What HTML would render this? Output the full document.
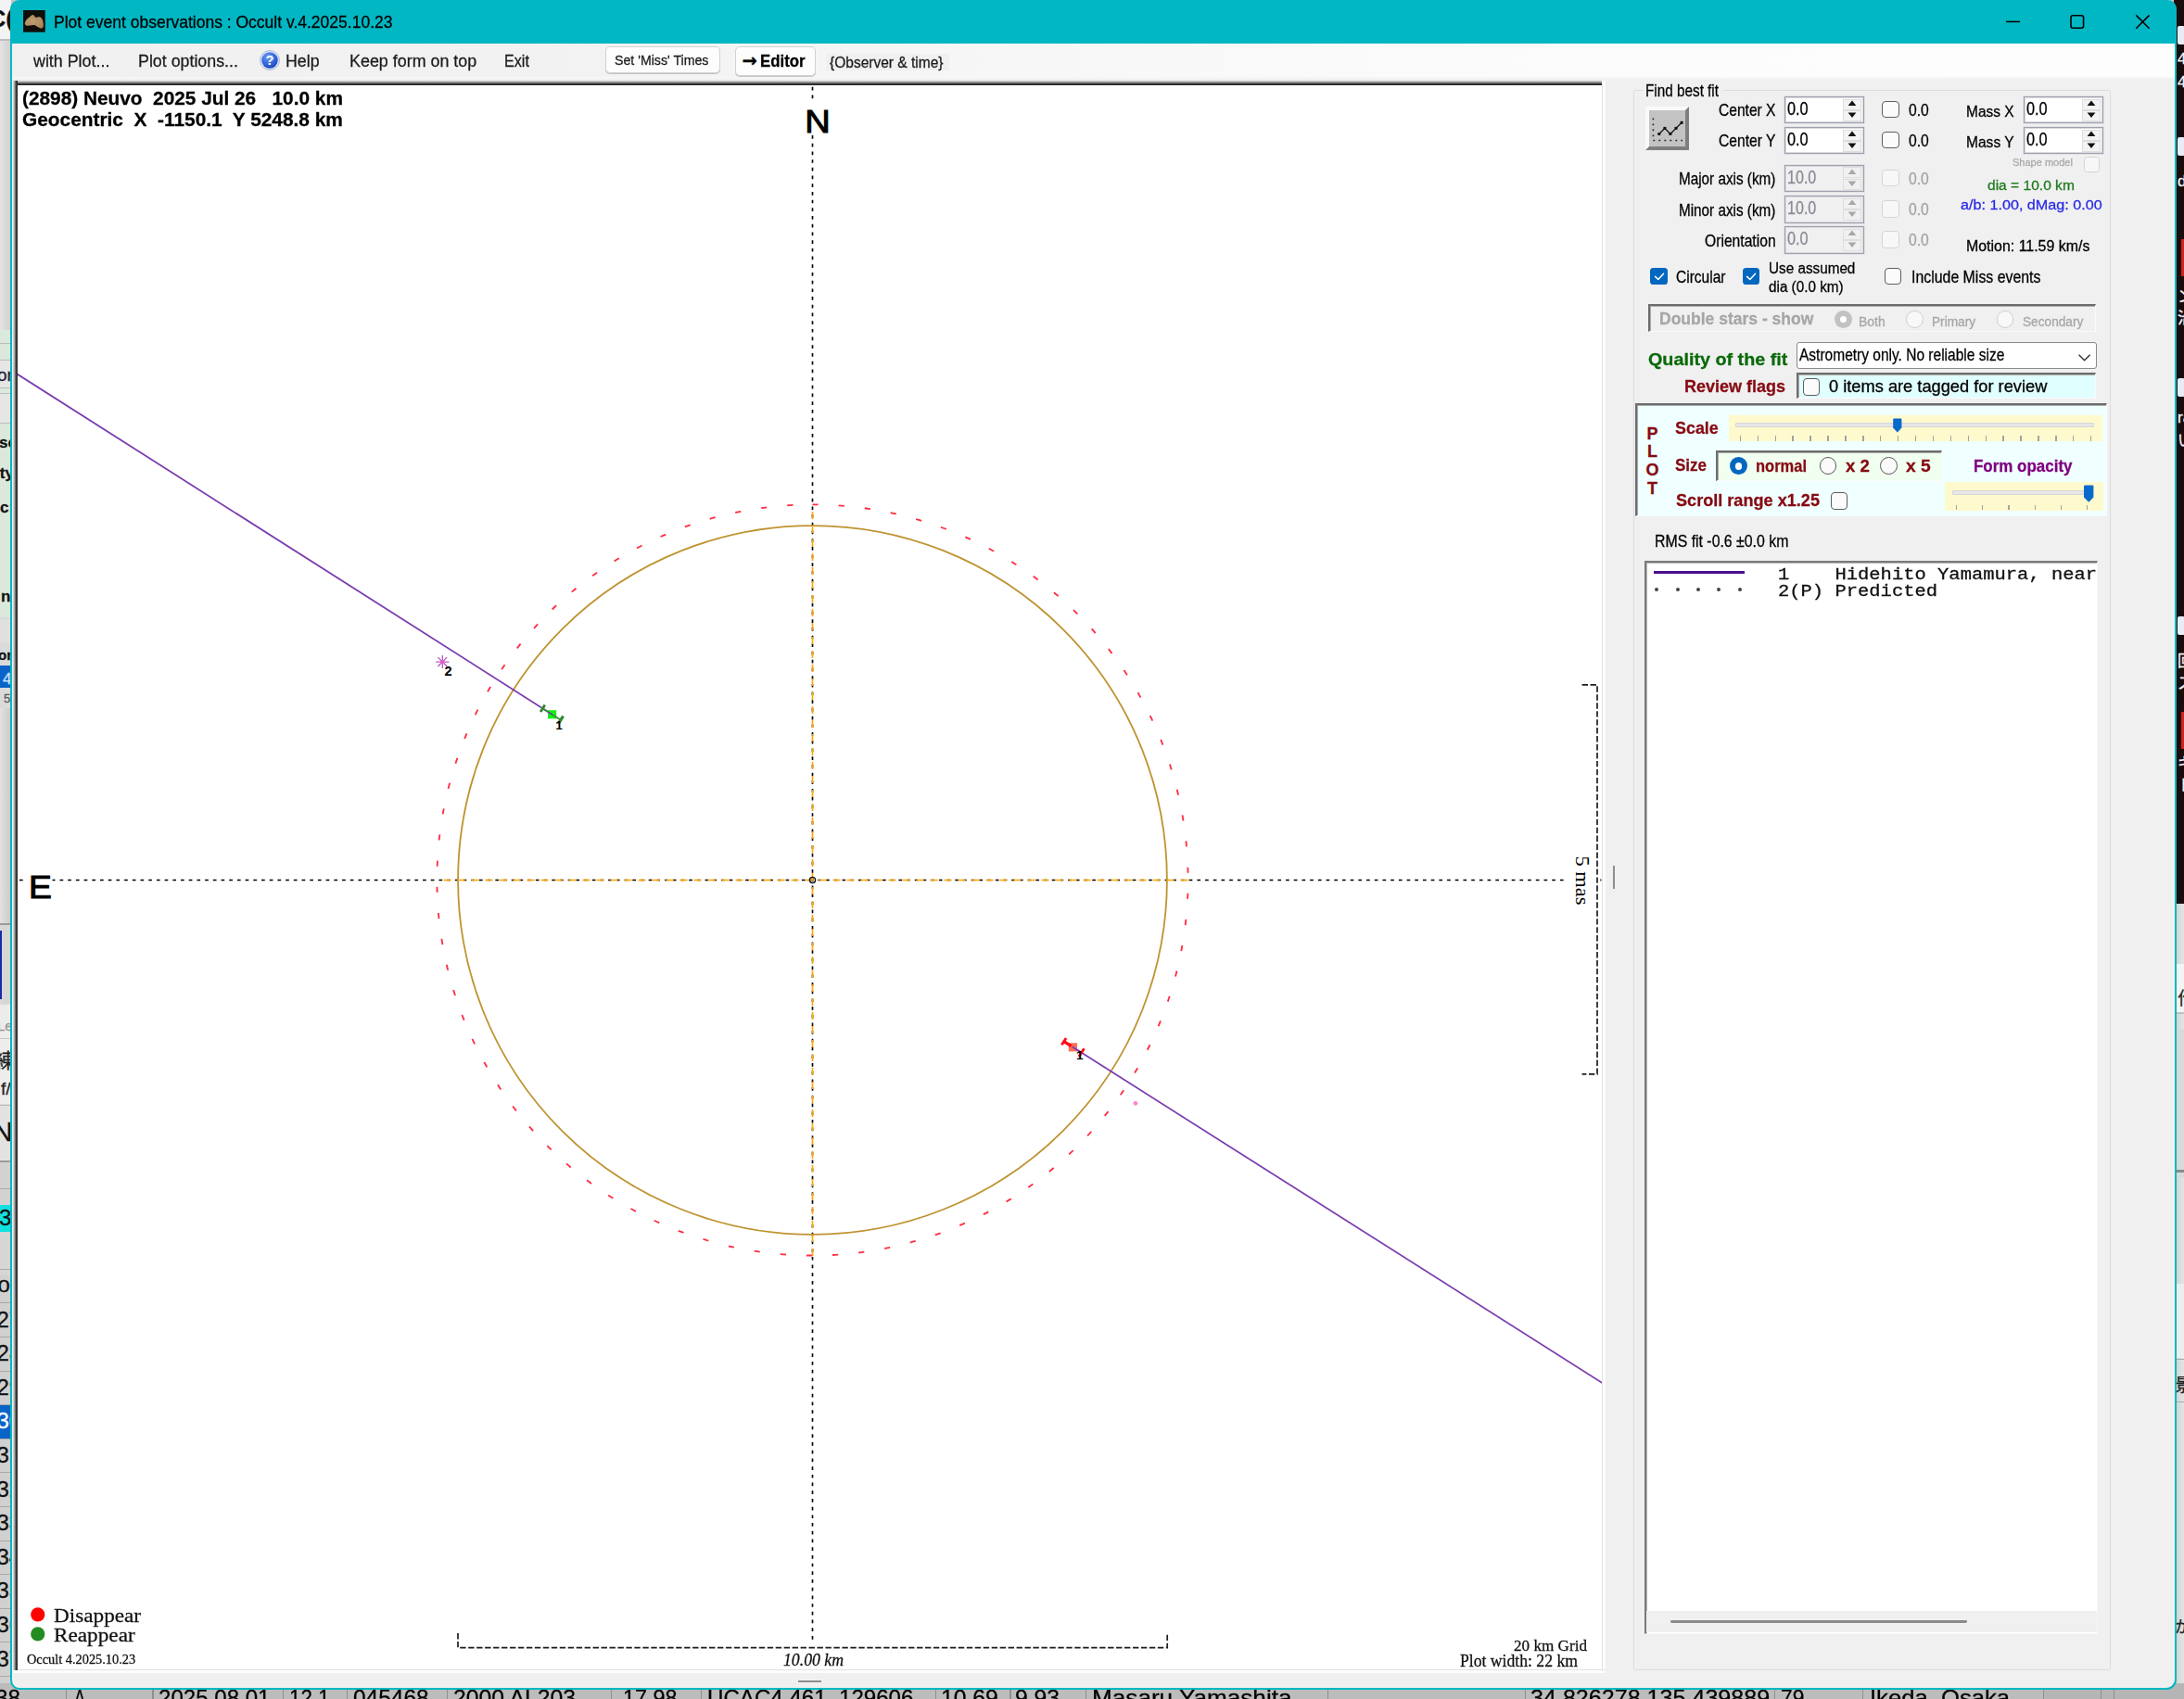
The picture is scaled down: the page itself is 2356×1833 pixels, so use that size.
<!DOCTYPE html>
<html lang="en"><head><meta charset="utf-8"><title>Plot event observations : Occult v.4.2025.10.23</title>
<style>
html,body{margin:0;padding:0}
body{width:2356px;height:1833px;position:relative;overflow:hidden;background:#c3c3c3;font-family:"Liberation Sans",sans-serif}
.b{position:absolute;box-sizing:border-box}
.t{position:absolute;white-space:pre;line-height:1;display:block;-webkit-text-stroke:0.28px}
svg{position:absolute;left:0;top:0}
</style></head><body>
<div id="desktop-background">
<div class="b" style="left:0.00px;top:0.00px;width:12.00px;height:1833.00px;background:#dadada;"></div>
<div class="b" style="left:0.00px;top:0.00px;width:12.00px;height:42.00px;background:#f3f3f3;"></div>
<span class="t" style="left:-12.60px;top:7.19px;font:normal 700 26px/1 'Liberation Sans',sans-serif;color:#111;">C(</span>
<div class="b" style="left:0.00px;top:42.00px;width:12.00px;height:2.00px;background:#bdbdbd;"></div>
<div class="b" style="left:0.00px;top:44.00px;width:12.00px;height:312.00px;background:linear-gradient(90deg,#e4e4e4,#cfcfcf);"></div>
<div class="b" style="left:0.00px;top:356.00px;width:12.00px;height:33.00px;background:#dbe8dc;"></div>
<div class="b" style="left:0.00px;top:370.00px;width:12.00px;height:1.00px;background:#bcbcbc;"></div>
<div class="b" style="left:0.00px;top:388.00px;width:12.00px;height:31.00px;background:#e6e6e6;"></div>
<div class="b" style="left:0.00px;top:388.00px;width:12.00px;height:1.00px;background:#bcbcbc;"></div>
<span class="t" style="left:-3.00px;top:395.11px;font:normal 400 19px/1 'Liberation Sans',sans-serif;color:#223;">or</span>
<div class="b" style="left:0.00px;top:418.00px;width:12.00px;height:6.00px;background:#dbe8dc;"></div>
<div class="b" style="left:0.00px;top:418.00px;width:12.00px;height:1.00px;background:#bcbcbc;"></div>
<div class="b" style="left:0.00px;top:424.00px;width:12.00px;height:1.00px;background:#bcbcbc;"></div>
<div class="b" style="left:0.00px;top:425.00px;width:12.00px;height:31.00px;background:#e6e6e6;"></div>
<div class="b" style="left:0.00px;top:456.00px;width:12.00px;height:210.00px;background:#dbe8dc;"></div>
<div class="b" style="left:0.00px;top:456.00px;width:12.00px;height:1.00px;background:#bcbcbc;"></div>
<span class="t" style="left:-1.00px;top:468.81px;font:normal 700 17px/1 'Liberation Sans',sans-serif;color:#111;">se</span>
<span class="t" style="left:-5.00px;top:501.81px;font:normal 700 17px/1 'Liberation Sans',sans-serif;color:#111;">ity</span>
<span class="t" style="left:0.00px;top:538.81px;font:normal 700 17px/1 'Liberation Sans',sans-serif;color:#111;">c:</span>
<span class="t" style="left:1.00px;top:634.81px;font:normal 700 17px/1 'Liberation Sans',sans-serif;color:#111;">n</span>
<div class="b" style="left:0.00px;top:668.00px;width:12.00px;height:25.00px;background:#e0e0e0;"></div>
<span class="t" style="left:-2.00px;top:698.50px;font:normal 700 15px/1 'Liberation Sans',sans-serif;color:#111;">or</span>
<div class="b" style="left:0.00px;top:718.00px;width:12.00px;height:24.00px;background:#0a64c8;"></div>
<span class="t" style="left:3.00px;top:723.81px;font:normal 400 17px/1 'Liberation Sans',sans-serif;color:#cfe4ff;">4</span>
<span class="t" style="left:4.00px;top:747.19px;font:normal 400 13px/1 'Liberation Sans',sans-serif;color:#555;">5</span>
<div class="b" style="left:0.00px;top:764.00px;width:12.00px;height:232.00px;background:linear-gradient(90deg,#e2e2e2,#c9c9c9);"></div>
<div class="b" style="left:0.00px;top:996.00px;width:12.00px;height:2.00px;background:#9a9a9a;"></div>
<div class="b" style="left:0.00px;top:1004.00px;width:2.00px;height:74.00px;background:#1a2aa8;"></div>
<div class="b" style="left:2.00px;top:998.00px;width:10.00px;height:84.00px;background:#d6d6d6;"></div>
<div class="b" style="left:0.00px;top:1084.00px;width:12.00px;height:36.00px;background:#ececec;"></div>
<span class="t" style="left:-3.00px;top:1098.50px;font:normal 400 15px/1 'Liberation Sans',sans-serif;color:#999;">Le</span>
<div class="b" style="left:0.00px;top:1120.00px;width:12.00px;height:1.00px;background:#c8c8c8;"></div>
<div class="b" style="left:0.00px;top:1121.00px;width:12.00px;height:70.00px;background:#ededed;"></div>
<span class="t" style="left:-6.00px;top:1133.57px;font:normal 400 22px/1 'Liberation Sans',sans-serif;color:#222;font-family:'Liberation Sans','Noto Sans CJK JP',sans-serif;">練</span>
<span class="t" style="left:1.00px;top:1165.11px;font:normal 400 19px/1 'Liberation Sans',sans-serif;color:#222;">f/</span>
<div class="b" style="left:0.00px;top:1192.00px;width:12.00px;height:60.00px;background:#e2e2e2;"></div>
<div class="b" style="left:0.00px;top:1192.00px;width:12.00px;height:1.00px;background:#bbb;"></div>
<span class="t" style="left:-8.00px;top:1205.80px;font:normal 400 30px/1 'Liberation Sans',sans-serif;color:#111;">N(</span>
<div class="b" style="left:0.00px;top:1252.00px;width:12.00px;height:2.00px;background:#9c9c9c;"></div>
<div class="b" style="left:0.00px;top:1254.00px;width:12.00px;height:52.00px;background:#d2d2d2;"></div>
<div class="b" style="left:0.00px;top:1282.00px;width:12.00px;height:1.00px;background:#aaa;"></div>
<div class="b" style="left:0.00px;top:1299.50px;width:12.00px;height:29.50px;background:#12e0e0;"></div>
<span class="t" style="left:-1.00px;top:1302.48px;font:normal 400 24px/1 'Liberation Sans',sans-serif;color:#111;">3</span>
<div class="b" style="left:0.00px;top:1329.00px;width:12.00px;height:47.00px;background:#d6d6d6;"></div>
<div class="b" style="left:0.00px;top:1376.00px;width:12.00px;height:460.00px;background:#d0d0d0;"></div>
<div class="b" style="left:0.00px;top:1368.80px;width:12.00px;height:1.00px;background:#a8a8a8;"></div>
<span class="t" style="left:-2.50px;top:1373.88px;font:normal 400 24px/1 'Liberation Sans',sans-serif;color:#111;">o</span>
<div class="b" style="left:0.00px;top:1405.40px;width:12.00px;height:1.00px;background:#a8a8a8;"></div>
<span class="t" style="left:-3.60px;top:1411.68px;font:normal 400 24px/1 'Liberation Sans',sans-serif;color:#111;">27</span>
<div class="b" style="left:0.00px;top:1442.00px;width:12.00px;height:1.00px;background:#a8a8a8;"></div>
<span class="t" style="left:-3.60px;top:1448.28px;font:normal 400 24px/1 'Liberation Sans',sans-serif;color:#111;">28</span>
<div class="b" style="left:0.00px;top:1478.60px;width:12.00px;height:1.00px;background:#a8a8a8;"></div>
<span class="t" style="left:-3.60px;top:1484.88px;font:normal 400 24px/1 'Liberation Sans',sans-serif;color:#111;">29</span>
<div class="b" style="left:0.00px;top:1515.20px;width:12.00px;height:1.00px;background:#a8a8a8;"></div>
<div class="b" style="left:0.00px;top:1516.20px;width:12.00px;height:35.60px;background:#0a64c8;"></div>
<span class="t" style="left:-3.60px;top:1521.48px;font:normal 400 24px/1 'Liberation Sans',sans-serif;color:#fff;">30</span>
<div class="b" style="left:0.00px;top:1551.80px;width:12.00px;height:1.00px;background:#a8a8a8;"></div>
<span class="t" style="left:-3.60px;top:1558.08px;font:normal 400 24px/1 'Liberation Sans',sans-serif;color:#111;">31</span>
<div class="b" style="left:0.00px;top:1588.40px;width:12.00px;height:1.00px;background:#a8a8a8;"></div>
<span class="t" style="left:-3.60px;top:1594.68px;font:normal 400 24px/1 'Liberation Sans',sans-serif;color:#111;">32</span>
<div class="b" style="left:0.00px;top:1625.00px;width:12.00px;height:1.00px;background:#a8a8a8;"></div>
<span class="t" style="left:-3.60px;top:1631.28px;font:normal 400 24px/1 'Liberation Sans',sans-serif;color:#111;">33</span>
<div class="b" style="left:0.00px;top:1661.60px;width:12.00px;height:1.00px;background:#a8a8a8;"></div>
<span class="t" style="left:-3.60px;top:1667.88px;font:normal 400 24px/1 'Liberation Sans',sans-serif;color:#111;">34</span>
<div class="b" style="left:0.00px;top:1698.20px;width:12.00px;height:1.00px;background:#a8a8a8;"></div>
<span class="t" style="left:-3.60px;top:1704.48px;font:normal 400 24px/1 'Liberation Sans',sans-serif;color:#111;">35</span>
<div class="b" style="left:0.00px;top:1734.80px;width:12.00px;height:1.00px;background:#a8a8a8;"></div>
<span class="t" style="left:-3.60px;top:1741.08px;font:normal 400 24px/1 'Liberation Sans',sans-serif;color:#111;">36</span>
<div class="b" style="left:0.00px;top:1771.40px;width:12.00px;height:1.00px;background:#a8a8a8;"></div>
<span class="t" style="left:-3.60px;top:1777.68px;font:normal 400 24px/1 'Liberation Sans',sans-serif;color:#111;">37</span>
<div class="b" style="left:0.00px;top:1808.00px;width:12.00px;height:1.00px;background:#a8a8a8;"></div>
<div class="b" style="left:2345.00px;top:0.00px;width:11.00px;height:1833.00px;background:#1b0c0c;"></div>
<div class="b" style="left:2345.00px;top:975.00px;width:11.00px;height:858.00px;background:linear-gradient(90deg,#d0d0d0,#e4e4e4);"></div>
<div class="b" style="left:2349.00px;top:28.00px;width:8.00px;height:20.00px;background:#e8ecf4;border-radius:2px"></div>
<div class="b" style="left:2349.00px;top:148.00px;width:8.00px;height:20.00px;background:#e8ecf4;border-radius:2px"></div>
<div class="b" style="left:2349.00px;top:408.00px;width:8.00px;height:20.00px;background:#e8ecf4;border-radius:2px"></div>
<div class="b" style="left:2349.00px;top:665.00px;width:8.00px;height:20.00px;background:#e8ecf4;border-radius:2px"></div>
<div class="b" style="left:2353.00px;top:258.00px;width:3.00px;height:40.00px;background:#d42020;"></div>
<div class="b" style="left:2353.00px;top:768.00px;width:3.00px;height:40.00px;background:#d42020;"></div>
<span class="t" style="left:2349.00px;top:54.81px;font:normal 400 17px/1 'Liberation Sans',sans-serif;color:#f4f4f4;font-family:'Liberation Sans','Noto Sans CJK JP',sans-serif;">4</span>
<span class="t" style="left:2349.00px;top:79.81px;font:normal 400 17px/1 'Liberation Sans',sans-serif;color:#f4f4f4;font-family:'Liberation Sans','Noto Sans CJK JP',sans-serif;">4</span>
<span class="t" style="left:2349.00px;top:186.81px;font:normal 400 17px/1 'Liberation Sans',sans-serif;color:#f4f4f4;font-family:'Liberation Sans','Noto Sans CJK JP',sans-serif;">d</span>
<span class="t" style="left:2349.00px;top:311.81px;font:normal 400 17px/1 'Liberation Sans',sans-serif;color:#f4f4f4;font-family:'Liberation Sans','Noto Sans CJK JP',sans-serif;">ン</span>
<span class="t" style="left:2349.00px;top:334.81px;font:normal 400 17px/1 'Liberation Sans',sans-serif;color:#f4f4f4;font-family:'Liberation Sans','Noto Sans CJK JP',sans-serif;">治</span>
<span class="t" style="left:2349.00px;top:441.81px;font:normal 400 17px/1 'Liberation Sans',sans-serif;color:#f4f4f4;font-family:'Liberation Sans','Noto Sans CJK JP',sans-serif;">ra</span>
<span class="t" style="left:2349.00px;top:466.81px;font:normal 400 17px/1 'Liberation Sans',sans-serif;color:#f4f4f4;font-family:'Liberation Sans','Noto Sans CJK JP',sans-serif;">い</span>
<span class="t" style="left:2349.00px;top:704.81px;font:normal 400 17px/1 'Liberation Sans',sans-serif;color:#f4f4f4;font-family:'Liberation Sans','Noto Sans CJK JP',sans-serif;">回</span>
<span class="t" style="left:2349.00px;top:728.81px;font:normal 400 17px/1 'Liberation Sans',sans-serif;color:#f4f4f4;font-family:'Liberation Sans','Noto Sans CJK JP',sans-serif;">ス</span>
<span class="t" style="left:2349.00px;top:814.81px;font:normal 400 17px/1 'Liberation Sans',sans-serif;color:#f4f4f4;font-family:'Liberation Sans','Noto Sans CJK JP',sans-serif;">キ</span>
<span class="t" style="left:2349.00px;top:838.81px;font:normal 400 17px/1 'Liberation Sans',sans-serif;color:#f4f4f4;font-family:'Liberation Sans','Noto Sans CJK JP',sans-serif;">ト</span>
<div class="b" style="left:2346.00px;top:1040.00px;width:10.00px;height:52.00px;background:#f4f4f4;"></div>
<span class="t" style="left:2349.00px;top:1068.11px;font:normal 400 19px/1 'Liberation Sans',sans-serif;color:#222;font-family:'Liberation Sans','Noto Sans CJK JP',sans-serif;">作</span>
<div class="b" style="left:2346.00px;top:1092.00px;width:10.00px;height:2.00px;background:#c0c0c0;"></div>
<div class="b" style="left:2346.00px;top:1110.00px;width:10.00px;height:160.00px;background:#d9d9d9;"></div>
<div class="b" style="left:2346.00px;top:1262.00px;width:10.00px;height:3.00px;background:#8a8a8a;"></div>
<div class="b" style="left:2346.00px;top:1385.00px;width:10.00px;height:80.00px;background:#eeeeee;"></div>
<div class="b" style="left:2346.00px;top:1466.00px;width:10.00px;height:1.00px;background:#aaa;"></div>
<div class="b" style="left:2346.00px;top:1512.00px;width:10.00px;height:1.00px;background:#aaa;"></div>
<span class="t" style="left:2346.00px;top:1485.11px;font:normal 400 19px/1 'Liberation Sans',sans-serif;color:#222;font-family:'Liberation Sans','Noto Sans CJK JP',sans-serif;">景</span>
<span class="t" style="left:2346.00px;top:1746.81px;font:normal 400 17px/1 'Liberation Sans',sans-serif;color:#222;font-family:'Liberation Sans','Noto Sans CJK JP',sans-serif;">が</span>
<div class="b" style="left:0.00px;top:1816.00px;width:2356.00px;height:17.00px;background:#bcbcbc;"></div>
<div class="b" style="left:2205.00px;top:1816.00px;width:151.00px;height:17.00px;background:#b5b5b5;"></div>
<div class="b" style="left:71.00px;top:1816.00px;width:1.30px;height:17.00px;background:#8f8f8f;"></div>
<div class="b" style="left:164.40px;top:1816.00px;width:1.30px;height:17.00px;background:#8f8f8f;"></div>
<div class="b" style="left:305.00px;top:1816.00px;width:1.30px;height:17.00px;background:#8f8f8f;"></div>
<div class="b" style="left:374.00px;top:1816.00px;width:1.30px;height:17.00px;background:#8f8f8f;"></div>
<div class="b" style="left:482.00px;top:1816.00px;width:1.30px;height:17.00px;background:#8f8f8f;"></div>
<div class="b" style="left:658.50px;top:1816.00px;width:1.30px;height:17.00px;background:#8f8f8f;"></div>
<div class="b" style="left:755.70px;top:1816.00px;width:1.30px;height:17.00px;background:#8f8f8f;"></div>
<div class="b" style="left:1009.20px;top:1816.00px;width:1.30px;height:17.00px;background:#8f8f8f;"></div>
<div class="b" style="left:1089.40px;top:1816.00px;width:1.30px;height:17.00px;background:#8f8f8f;"></div>
<div class="b" style="left:1170.90px;top:1816.00px;width:1.30px;height:17.00px;background:#8f8f8f;"></div>
<div class="b" style="left:1431.90px;top:1816.00px;width:1.30px;height:17.00px;background:#8f8f8f;"></div>
<div class="b" style="left:1644.80px;top:1816.00px;width:1.30px;height:17.00px;background:#8f8f8f;"></div>
<div class="b" style="left:1914.00px;top:1816.00px;width:1.30px;height:17.00px;background:#8f8f8f;"></div>
<div class="b" style="left:2008.60px;top:1816.00px;width:1.30px;height:17.00px;background:#8f8f8f;"></div>
<div class="b" style="left:2204.20px;top:1816.00px;width:1.30px;height:17.00px;background:#8f8f8f;"></div>
<div class="b" style="left:2265.70px;top:1816.00px;width:1.30px;height:17.00px;background:#8f8f8f;"></div>
<div class="b" style="left:2279.80px;top:1816.00px;width:1.30px;height:17.00px;background:#8f8f8f;"></div>
<span class="t" style="left:-5.00px;top:1820.48px;font:normal 400 24px/1 'Liberation Sans',sans-serif;color:#000;transform:scaleX(1.0114);transform-origin:left center;">38</span>
<span class="t" style="left:80.00px;top:1820.48px;font:normal 400 24px/1 'Liberation Sans',sans-serif;color:#000;transform:scaleX(0.7496);transform-origin:left center;">A</span>
<span class="t" style="left:171.00px;top:1820.48px;font:normal 400 24px/1 'Liberation Sans',sans-serif;color:#000;transform:scaleX(1.0032);transform-origin:left center;">2025.08.01</span>
<span class="t" style="left:312.30px;top:1820.48px;font:normal 400 24px/1 'Liberation Sans',sans-serif;color:#000;transform:scaleX(0.9355);transform-origin:left center;">12.1</span>
<span class="t" style="left:380.70px;top:1820.48px;font:normal 400 24px/1 'Liberation Sans',sans-serif;color:#000;transform:scaleX(1.0201);transform-origin:left center;">045468</span>
<span class="t" style="left:488.70px;top:1820.48px;font:normal 400 24px/1 'Liberation Sans',sans-serif;color:#000;transform:scaleX(1.0302);transform-origin:left center;">2000 AL203</span>
<span class="t" style="left:672.00px;top:1820.48px;font:normal 400 24px/1 'Liberation Sans',sans-serif;color:#000;transform:scaleX(0.9740);transform-origin:left center;">17.98</span>
<span class="t" style="left:763.00px;top:1820.48px;font:normal 400 24px/1 'Liberation Sans',sans-serif;color:#000;transform:scaleX(1.0041);transform-origin:left center;">UCAC4 461_129606</span>
<span class="t" style="left:1015.20px;top:1820.48px;font:normal 400 24px/1 'Liberation Sans',sans-serif;color:#000;transform:scaleX(1.0290);transform-origin:left center;">10.69</span>
<span class="t" style="left:1095.30px;top:1820.48px;font:normal 400 24px/1 'Liberation Sans',sans-serif;color:#000;transform:scaleX(1.0297);transform-origin:left center;">9.93</span>
<span class="t" style="left:1177.70px;top:1820.48px;font:normal 400 24px/1 'Liberation Sans',sans-serif;color:#000;transform:scaleX(1.0891);transform-origin:left center;">Masaru Yamashita</span>
<span class="t" style="left:1650.70px;top:1820.48px;font:normal 400 24px/1 'Liberation Sans',sans-serif;color:#000;transform:scaleX(1.0457);transform-origin:left center;">34.826278 135.439889</span>
<span class="t" style="left:1921.30px;top:1820.48px;font:normal 400 24px/1 'Liberation Sans',sans-serif;color:#000;transform:scaleX(0.9477);transform-origin:left center;">79</span>
<span class="t" style="left:2016.70px;top:1820.48px;font:normal 400 24px/1 'Liberation Sans',sans-serif;color:#000;transform:scaleX(1.0685);transform-origin:left center;">Ikeda, Osaka</span>
</div>
<header id="window-chrome">
<div class="b" id="win" style="left:11px;top:0;width:2337px;height:1823px;background:#f0f0f0;border:2px solid #00b7c3;border-top:0;border-radius:10px 10px 11px 10px;overflow:hidden"></div>
<div class="b" style="left:11.00px;top:0.00px;width:2337.00px;height:47.00px;background:#00b7c3;border-radius:10px 10px 0 0"></div>
<svg width="23.8" height="23.7" viewBox="0 0 24 24" style="left:25.1px;top:11.2px"><defs><radialGradient id="ag" cx="0.45" cy="0.45" r="0.7"><stop offset="0" stop-color="#bd9d70"/><stop offset="0.7" stop-color="#ad8d60"/><stop offset="1" stop-color="#9a7c52"/></radialGradient><filter id="ab" x="-10%" y="-10%" width="120%" height="120%"><feGaussianBlur stdDeviation="0.35"/></filter></defs><rect width="24" height="24" fill="#100e09"/>
<path d="M1.72 15.02 Q1.52 14.21 2.23 12.59 Q2.94 10.97 4.15 9.75 Q5.36 8.54 6.98 7.32 Q8.60 6.11 9.52 5.41 Q10.43 4.70 11.04 5.10 Q11.64 5.50 12.14 6.42 Q12.65 7.33 13.46 7.74 Q14.27 8.14 15.48 7.63 Q16.70 7.13 17.71 7.23 Q18.72 7.33 19.73 8.34 Q20.75 9.35 21.26 10.97 Q21.76 12.59 21.97 14.31 Q22.17 16.03 22.07 17.34 Q21.96 18.66 21.15 19.37 Q20.34 20.08 19.23 19.88 Q18.12 19.68 16.80 18.87 Q15.49 18.06 14.28 17.14 Q13.06 16.23 11.85 16.13 Q10.63 16.03 8.80 16.44 Q6.98 16.84 5.46 16.94 Q3.95 17.04 2.94 16.43 Q1.92 15.83 1.72 15.02 Z" fill="url(#ag)" filter="url(#ab)"/>
<path d="M14.3 9 C14.8 11.5 14.2 14 13.2 15.8" stroke="#9b7d55" stroke-width="0.9" stroke-opacity="0.45" fill="none" filter="url(#ab)"/></svg>
<span class="t" style="left:57.80px;top:15.15px;font:normal 400 18.6px/1 'Liberation Sans',sans-serif;color:#000;transform:scaleX(0.9412);transform-origin:left center;">Plot event observations : Occult v.4.2025.10.23</span>
<svg width="200" height="47" viewBox="0 0 200 47" style="left:2140px;top:0">
<path d="M24 23.4 H39" stroke="#000" stroke-width="1.5" fill="none"/>
<rect x="94" y="16.8" width="13.6" height="13.4" rx="2.2" fill="none" stroke="#000" stroke-width="1.6"/>
<path d="M164.3 16.4 L178.6 30.7 M178.6 16.4 L164.3 30.7" stroke="#000" stroke-width="1.5" fill="none"/></svg>
<div class="b" style="left:13.00px;top:47.00px;width:2333.00px;height:37.00px;background:linear-gradient(90deg,#f0f0f0 0%,#f2f2f2 25%,#f8f8f8 50%,#fcfcfc 75%,#fdfdfd 100%);"></div>
<div class="b" style="left:13.00px;top:83.00px;width:2333.00px;height:3.00px;background:linear-gradient(180deg,#f8f8f8,#f0f0f0);"></div>
<span class="t" style="left:36.10px;top:56.50px;font:normal 400 18.9px/1 'Liberation Sans',sans-serif;color:#1b1b1b;transform:scaleX(0.9452);transform-origin:left center;">with Plot...</span>
<span class="t" style="left:148.70px;top:56.50px;font:normal 400 18.9px/1 'Liberation Sans',sans-serif;color:#1b1b1b;transform:scaleX(0.9431);transform-origin:left center;">Plot options...</span>
<span class="t" style="left:308.10px;top:56.50px;font:normal 400 18.9px/1 'Liberation Sans',sans-serif;color:#1b1b1b;transform:scaleX(0.9416);transform-origin:left center;">Help</span>
<span class="t" style="left:376.80px;top:56.50px;font:normal 400 18.9px/1 'Liberation Sans',sans-serif;color:#1b1b1b;transform:scaleX(0.9470);transform-origin:left center;">Keep form on top</span>
<span class="t" style="left:543.50px;top:56.50px;font:normal 400 18.9px/1 'Liberation Sans',sans-serif;color:#1b1b1b;transform:scaleX(0.8538);transform-origin:left center;">Exit</span>
<svg width="24" height="24" viewBox="0 0 22 22" style="left:278.7px;top:53.4px">
<defs><radialGradient id="hg" cx="0.4" cy="0.3" r="0.8"><stop offset="0" stop-color="#6f9df5"/><stop offset="0.6" stop-color="#2e62d8"/><stop offset="1" stop-color="#1b3fa8"/></radialGradient></defs>
<circle cx="11" cy="11" r="9.6" fill="#dfe6f6" stroke="#9fb2dc" stroke-width="0.8"/>
<circle cx="11" cy="11" r="8" fill="url(#hg)"/>
<text x="11" y="15.8" text-anchor="middle" font-family="Liberation Sans,sans-serif" font-weight="700" font-size="13.5" fill="#fff">?</text></svg>
<div class="b" style="left:653.00px;top:50.00px;width:124.20px;height:29.40px;background:#fdfdfd;border:1px solid #d2d2d2;border-radius:5px;box-shadow:0 1px 0 #c4c4c4"></div>
<span class="t" style="left:662.70px;top:57.64px;font:normal 400 14.6px/1 'Liberation Sans',sans-serif;color:#1a1a1a;transform:scaleX(0.9709);transform-origin:left center;">Set &#x27;Miss&#x27; Times</span>
<div class="b" style="left:792.50px;top:49.60px;width:87.00px;height:32.40px;background:#fdfdfd;border:1px solid #d2d2d2;border-radius:5px;box-shadow:0 1px 0 #c4c4c4"></div>
<span class="t" style="left:800.6px;top:56px;font:700 19.5px/1 'DejaVu Sans','Liberation Sans',sans-serif;color:#000">→</span>
<span class="t" style="left:820.40px;top:56.95px;font:normal 700 18.6px/1 'Liberation Sans',sans-serif;color:#000;transform:scaleX(0.9045);transform-origin:left center;">Editor</span>
<div class="b" style="left:890.60px;top:57.70px;width:133.40px;height:18.00px;background:#f0f0f0;"></div>
<span class="t" style="left:895.40px;top:59.17px;font:normal 400 17.4px/1 'Liberation Sans',sans-serif;color:#1a1a1a;transform:scaleX(0.8928);transform-origin:left center;">{Observer &amp; time}</span>
</header>
<main id="plot-area">
<div class="b" style="left:14.00px;top:87.00px;width:1718.00px;height:1718.00px;background:#fff;"></div>
<div class="b" style="left:14.00px;top:87.00px;width:1714.00px;height:5.00px;background:linear-gradient(180deg,#dcdcdc 0%,#9a9a9a 35%,#3a3a3a 70%,#1c1c1c 100%);"></div>
<div class="b" style="left:14.20px;top:87.00px;width:4.80px;height:1714.60px;background:linear-gradient(90deg,#e6e6e6 0%,#a0a0a0 35%,#444 65%,#222 100%);"></div>
<div class="b" style="left:1728.00px;top:92.00px;width:4.00px;height:1713.00px;background:linear-gradient(90deg,#e2e2e2 0,#e2e2e2 25%,#fdfdfd 25%,#fdfdfd 100%);"></div>
<div class="b" style="left:19.00px;top:1801.00px;width:1713.00px;height:4.00px;background:linear-gradient(180deg,#e2e2e2 0,#e2e2e2 25%,#fdfdfd 25%,#fdfdfd 100%);"></div>
<svg width="2356" height="1833" viewBox="0 0 2356 1833"><defs><clipPath id="pc"><rect x="19" y="92" width="1709" height="1709"/></clipPath></defs><g clip-path="url(#pc)" fill="none">
<path d="M876.5 93.8 V1769.6" stroke="#000" stroke-width="1.65" stroke-dasharray="3.7 5.004"/>
<path d="M21 949.45 H1687.5" stroke="#000" stroke-width="1.65" stroke-dasharray="3.7 5.001"/>
<rect x="1726" y="948.45" width="1.6" height="2" fill="#555"/>
<rect x="866" y="109" width="32" height="37" fill="#fff"/>
<rect x="26" y="938" width="30.5" height="36" fill="#fff"/>
<circle cx="876.5" cy="949.45" r="382.4" stroke="#bf9330" stroke-width="1.8"/>
<circle cx="876.5" cy="949.45" r="405.1" stroke="#ff2e44" stroke-width="1.85" stroke-dasharray="6.1512 22.1301" transform="rotate(-90 876.5 949.45)"/>
<path d="M478.5 949.45 H1282" stroke="#ffa400" stroke-width="1.6" stroke-dasharray="8.1 6.9"/>
<path d="M876.5 551.9 V1355" stroke="#ffa400" stroke-width="1.6" stroke-dasharray="8.1 6.9"/>
<circle cx="876.5" cy="949.45" r="3.1" stroke="#111" stroke-width="1.4"/>
<path d="M18.3 403.4 L595.6 770.8" stroke="#7a3cb0" stroke-width="1.75"/>
<path d="M1157.4 1129.8 L1729 1492.3" stroke="#7a3cb0" stroke-width="1.75"/>
<rect x="591.0" y="766.1999999999999" width="9.2" height="9.2" fill="#19f019"/>
<path d="M585.5 764.4 L604.9 776.7" stroke="#2e8b2e" stroke-width="1.6"/>
<path d="M591.4 768.1 L595.6 770.8" stroke="#7a3cb0" stroke-width="1.6"/>
<path d="M587.8 760.6 L583.1 768.1" stroke="#2e8b2e" stroke-width="2.8"/>
<path d="M607.5 772.7 L602.3 780.8" stroke="#2e8b2e" stroke-width="3.2"/>
<rect x="1152.8000000000002" y="1125.2" width="9.2" height="9.2" fill="#ff6f55"/>
<path d="M1147.7 1123.6 L1155.7 1128.7" stroke="#ff0a14" stroke-width="3.2"/>
<path d="M1156.6 1129.3 L1165.8 1135.2" stroke="#7a3cb0" stroke-width="1.7"/>
<path d="M1150.1 1119.9 L1145.3 1127.3" stroke="#ff0a14" stroke-width="2.8"/>
<path d="M1169.5 1131.3 L1163.9 1140.1" stroke="#ff0a14" stroke-width="2.8"/>
<path d="M470.3 714.1 L484.3 714.1" stroke="#b04fc0" stroke-width="1.2"/>
<path d="M472.4 709.2 L482.2 719.0" stroke="#b04fc0" stroke-width="1.2"/>
<path d="M477.3 707.1 L477.3 721.1" stroke="#b04fc0" stroke-width="1.2"/>
<path d="M482.2 709.2 L472.4 719.0" stroke="#b04fc0" stroke-width="1.2"/>
<circle cx="477.3" cy="714.1" r="2.2" fill="#e55fc4"/>
<circle cx="1224.9" cy="1190.3" r="2.4" fill="#ff86cc"/>
<path d="M494 1762 V1777.7 H1259.2 V1762" stroke="#1e1e1e" stroke-width="1.7" stroke-dasharray="6.4 2.56"/>
<path d="M1706.6 738.8 H1723 V1158.8 H1706.6" stroke="#1e1e1e" stroke-width="1.7" stroke-dasharray="6.4 2.56"/>
</g>
<g font-family="Liberation Sans,sans-serif" font-weight="700" fill="#000">
<text transform="translate(868.2 142.5) scale(1.07 1)" font-size="35.6" font-weight="400" stroke="#000" stroke-width="1.1">N</text>
<text transform="translate(31 969.2) scale(1.04 1)" font-size="35.8" font-weight="400" stroke="#000" stroke-width="1.1">E</text>
<text x="479.6" y="729.2" font-size="14.6">2</text>
<text x="599.2" y="786.8" font-size="13.6">1</text>
<text x="1161" y="1143.4" font-size="13.6">1</text>
</g>
<text transform="translate(1699.8 923.4) rotate(90)" font-family="Liberation Serif,serif" font-size="22" fill="#000" textLength="53" lengthAdjust="spacingAndGlyphs">5 mas</text>
<circle cx="40.75" cy="1741.85" r="7.6" fill="#ff0000"/><circle cx="40.75" cy="1762.9" r="7.6" fill="#228b22"/>
</svg>
<span class="t" style="left:24.30px;top:95.81px;font:normal 700 20.3px/1 'Liberation Sans',sans-serif;color:#000;transform:scaleX(1.0261);transform-origin:left center;">(2898) Neuvo  2025 Jul 26   10.0 km</span>
<span class="t" style="left:24.30px;top:119.41px;font:normal 700 20.3px/1 'Liberation Sans',sans-serif;color:#000;transform:scaleX(1.0283);transform-origin:left center;">Geocentric  X  -1150.1  Y 5248.8 km</span>
<span class="t" style="left:57.90px;top:1732.71px;font:normal 400 21.6px/1 'Liberation Serif',serif;color:#111;transform:scaleX(1.0747);transform-origin:left center;">Disappear</span>
<span class="t" style="left:57.90px;top:1753.81px;font:normal 400 21.6px/1 'Liberation Serif',serif;color:#111;transform:scaleX(1.0754);transform-origin:left center;">Reappear</span>
<span class="t" style="left:29.30px;top:1783.47px;font:normal 400 14.6px/1 'Liberation Serif',serif;color:#111;transform:scaleX(0.9831);transform-origin:left center;">Occult 4.2025.10.23</span>
<span class="t" style="left:845.00px;top:1782.32px;font:italic 400 18.6px/1 'Liberation Serif',serif;color:#111;transform:scaleX(0.9532);transform-origin:left center;">10.00 km</span>
<span class="t" style="left:1633.20px;top:1767.46px;font:normal 400 17.6px/1 'Liberation Serif',serif;color:#111;transform:scaleX(0.9735);transform-origin:left center;">20 km Grid</span>
<span class="t" style="left:1574.90px;top:1783.29px;font:normal 400 18.4px/1 'Liberation Serif',serif;color:#111;transform:scaleX(0.9593);transform-origin:left center;">Plot width: 22 km</span>
<div class="b" style="left:861.00px;top:1813.00px;width:25.20px;height:1.60px;background:#8e8e8e;"></div>
<div class="b" style="left:1740.00px;top:933.80px;width:1.50px;height:25.00px;background:#8e8e8e;"></div>
</main>
<aside id="fit-panel">
<div class="b" style="left:1762.00px;top:97.00px;width:514.50px;height:1705.00px;border:1px solid #dcdcdc;border-radius:2px"></div>
<div class="b" style="left:1771.50px;top:90.00px;width:87.00px;height:14.00px;background:#f0f0f0;"></div>
<span class="t" style="left:1775.00px;top:90.33px;font:normal 400 17.8px/1 'Liberation Sans',sans-serif;color:#000;transform:scaleX(0.8597);transform-origin:left center;">Find best fit</span>
<div class="b" style="left:1774.60px;top:114.90px;width:47.80px;height:47.00px;background:#c3c3c3;border-style:solid;border-width:4.6px;border-color:#fafafa #7e7e7e #7e7e7e #fafafa"></div>
<svg width="48" height="47" viewBox="0 0 48 47" style="left:1774.6px;top:114.9px">
<path d="M8.4 12.5 V36.5" stroke="#222" stroke-width="1.6" stroke-dasharray="1.8 4.2" fill="none"/>
<path d="M8.4 36.5 H40" stroke="#222" stroke-width="1.6" stroke-dasharray="1.8 4.2" fill="none"/>
<path d="M14.8 29.5 L20.9 23.4 L26.9 29.5 L33 23.4 L39.1 17.3" stroke="#111" stroke-width="1.3" fill="none"/>
<g fill="#111"><rect x="13.3" y="28" width="3" height="3"/><rect x="19.4" y="21.9" width="3" height="3"/><rect x="25.4" y="28" width="3" height="3"/><rect x="31.5" y="21.9" width="3" height="3"/><rect x="37.6" y="15.8" width="3" height="3"/></g></svg>
<span class="t" style="left:1853.70px;top:111.43px;font:normal 400 17.8px/1 'Liberation Sans',sans-serif;color:#000;transform:scaleX(0.8755);transform-origin:left center;">Center X</span>
<div class="b" style="left:1924.70px;top:104.10px;width:86.40px;height:29.40px;background:#fff;border:1px solid #a0a2ac;box-shadow:inset 0 0 0 1px #d8d9e0,0 0 0 1px #e1e1e6"></div>
<div class="b" style="left:1987.70px;top:106.50px;width:20.60px;height:12.00px;background:#f3f3f3;border:1px solid #dedede"></div>
<div class="b" style="left:1987.70px;top:118.90px;width:20.60px;height:12.00px;background:#f3f3f3;border:1px solid #dedede"></div>
<svg width="12" height="26" viewBox="0 0 12 26" style="left:1992.0px;top:104.9px"><path d="M6 3.6 L10.4 9 H1.6 Z M6 22 L10.4 16.6 H1.6 Z" fill="#111"/></svg>
<span class="t" style="left:1927.90px;top:108.27px;font:normal 400 19.4px/1 'Liberation Sans',sans-serif;color:#000;transform:scaleX(0.8407);transform-origin:left center;">0.0</span>
<div class="b" style="left:2030.00px;top:108.90px;width:18.60px;height:18.60px;background:#fbfbfb;border:1.7px solid #5e5e5e;border-radius:4px"></div>
<span class="t" style="left:2058.60px;top:109.34px;font:normal 400 19.2px/1 'Liberation Sans',sans-serif;color:#000;transform:scaleX(0.8168);transform-origin:left center;">0.0</span>
<span class="t" style="left:1853.70px;top:144.43px;font:normal 400 17.8px/1 'Liberation Sans',sans-serif;color:#000;transform:scaleX(0.8795);transform-origin:left center;">Center Y</span>
<div class="b" style="left:1924.70px;top:137.10px;width:86.40px;height:29.40px;background:#fff;border:1px solid #a0a2ac;box-shadow:inset 0 0 0 1px #d8d9e0,0 0 0 1px #e1e1e6"></div>
<div class="b" style="left:1987.70px;top:139.50px;width:20.60px;height:12.00px;background:#f3f3f3;border:1px solid #dedede"></div>
<div class="b" style="left:1987.70px;top:151.90px;width:20.60px;height:12.00px;background:#f3f3f3;border:1px solid #dedede"></div>
<svg width="12" height="26" viewBox="0 0 12 26" style="left:1992.0px;top:137.9px"><path d="M6 3.6 L10.4 9 H1.6 Z M6 22 L10.4 16.6 H1.6 Z" fill="#111"/></svg>
<span class="t" style="left:1927.90px;top:141.27px;font:normal 400 19.4px/1 'Liberation Sans',sans-serif;color:#000;transform:scaleX(0.8407);transform-origin:left center;">0.0</span>
<div class="b" style="left:2030.00px;top:141.90px;width:18.60px;height:18.60px;background:#fbfbfb;border:1.7px solid #5e5e5e;border-radius:4px"></div>
<span class="t" style="left:2058.60px;top:142.34px;font:normal 400 19.2px/1 'Liberation Sans',sans-serif;color:#000;transform:scaleX(0.8168);transform-origin:left center;">0.0</span>
<span class="t" style="left:1810.70px;top:185.33px;font:normal 400 17.8px/1 'Liberation Sans',sans-serif;color:#000;transform:scaleX(0.8591);transform-origin:left center;">Major axis (km)</span>
<div class="b" style="left:1924.70px;top:178.00px;width:86.40px;height:29.40px;background:#f0f0f0;border:1px solid #a0a2ac;box-shadow:inset 0 0 0 1px #d8d9e0,0 0 0 1px #e1e1e6"></div>
<div class="b" style="left:1987.70px;top:180.40px;width:20.60px;height:12.00px;background:#f0f0f0;border:1px solid #dedede"></div>
<div class="b" style="left:1987.70px;top:192.80px;width:20.60px;height:12.00px;background:#f0f0f0;border:1px solid #dedede"></div>
<svg width="12" height="26" viewBox="0 0 12 26" style="left:1992.0px;top:178.8px"><path d="M6 3.6 L10.4 9 H1.6 Z M6 22 L10.4 16.6 H1.6 Z" fill="#a8a8a8"/></svg>
<span class="t" style="left:1927.90px;top:182.17px;font:normal 400 19.4px/1 'Liberation Sans',sans-serif;color:#8b8b97;transform:scaleX(0.8291);transform-origin:left center;">10.0</span>
<div class="b" style="left:2030.00px;top:182.80px;width:18.60px;height:18.60px;background:#f7f7f7;border:1.3px solid #d4d4d4;border-radius:3.6px"></div>
<span class="t" style="left:2058.60px;top:183.24px;font:normal 400 19.2px/1 'Liberation Sans',sans-serif;color:#a3a3a3;transform:scaleX(0.8168);transform-origin:left center;">0.0</span>
<span class="t" style="left:1810.70px;top:218.53px;font:normal 400 17.8px/1 'Liberation Sans',sans-serif;color:#000;transform:scaleX(0.8591);transform-origin:left center;">Minor axis (km)</span>
<div class="b" style="left:1924.70px;top:211.20px;width:86.40px;height:29.40px;background:#f0f0f0;border:1px solid #a0a2ac;box-shadow:inset 0 0 0 1px #d8d9e0,0 0 0 1px #e1e1e6"></div>
<div class="b" style="left:1987.70px;top:213.60px;width:20.60px;height:12.00px;background:#f0f0f0;border:1px solid #dedede"></div>
<div class="b" style="left:1987.70px;top:226.00px;width:20.60px;height:12.00px;background:#f0f0f0;border:1px solid #dedede"></div>
<svg width="12" height="26" viewBox="0 0 12 26" style="left:1992.0px;top:212.0px"><path d="M6 3.6 L10.4 9 H1.6 Z M6 22 L10.4 16.6 H1.6 Z" fill="#a8a8a8"/></svg>
<span class="t" style="left:1927.90px;top:215.37px;font:normal 400 19.4px/1 'Liberation Sans',sans-serif;color:#8b8b97;transform:scaleX(0.8291);transform-origin:left center;">10.0</span>
<div class="b" style="left:2030.00px;top:216.00px;width:18.60px;height:18.60px;background:#f7f7f7;border:1.3px solid #d4d4d4;border-radius:3.6px"></div>
<span class="t" style="left:2058.60px;top:216.44px;font:normal 400 19.2px/1 'Liberation Sans',sans-serif;color:#a3a3a3;transform:scaleX(0.8168);transform-origin:left center;">0.0</span>
<span class="t" style="left:1838.50px;top:251.53px;font:normal 400 17.8px/1 'Liberation Sans',sans-serif;color:#000;transform:scaleX(0.8809);transform-origin:left center;">Orientation</span>
<div class="b" style="left:1924.70px;top:244.20px;width:86.40px;height:29.40px;background:#f0f0f0;border:1px solid #a0a2ac;box-shadow:inset 0 0 0 1px #d8d9e0,0 0 0 1px #e1e1e6"></div>
<div class="b" style="left:1987.70px;top:246.60px;width:20.60px;height:12.00px;background:#f0f0f0;border:1px solid #dedede"></div>
<div class="b" style="left:1987.70px;top:259.00px;width:20.60px;height:12.00px;background:#f0f0f0;border:1px solid #dedede"></div>
<svg width="12" height="26" viewBox="0 0 12 26" style="left:1992.0px;top:245.0px"><path d="M6 3.6 L10.4 9 H1.6 Z M6 22 L10.4 16.6 H1.6 Z" fill="#a8a8a8"/></svg>
<span class="t" style="left:1927.90px;top:248.37px;font:normal 400 19.4px/1 'Liberation Sans',sans-serif;color:#8b8b97;transform:scaleX(0.8407);transform-origin:left center;">0.0</span>
<div class="b" style="left:2030.00px;top:249.00px;width:18.60px;height:18.60px;background:#f7f7f7;border:1.3px solid #d4d4d4;border-radius:3.6px"></div>
<span class="t" style="left:2058.60px;top:249.44px;font:normal 400 19.2px/1 'Liberation Sans',sans-serif;color:#a3a3a3;transform:scaleX(0.8168);transform-origin:left center;">0.0</span>
<span class="t" style="left:2121.40px;top:112.38px;font:normal 400 16.2px/1 'Liberation Sans',sans-serif;color:#000;transform:scaleX(0.9554);transform-origin:left center;">Mass X</span>
<span class="t" style="left:2121.40px;top:145.38px;font:normal 400 16.2px/1 'Liberation Sans',sans-serif;color:#000;transform:scaleX(0.9606);transform-origin:left center;">Mass Y</span>
<div class="b" style="left:2182.90px;top:104.10px;width:86.40px;height:29.40px;background:#fff;border:1px solid #a0a2ac;box-shadow:inset 0 0 0 1px #d8d9e0,0 0 0 1px #e1e1e6"></div>
<div class="b" style="left:2245.90px;top:106.50px;width:20.60px;height:12.00px;background:#f3f3f3;border:1px solid #dedede"></div>
<div class="b" style="left:2245.90px;top:118.90px;width:20.60px;height:12.00px;background:#f3f3f3;border:1px solid #dedede"></div>
<svg width="12" height="26" viewBox="0 0 12 26" style="left:2250.2px;top:104.9px"><path d="M6 3.6 L10.4 9 H1.6 Z M6 22 L10.4 16.6 H1.6 Z" fill="#111"/></svg>
<span class="t" style="left:2186.10px;top:108.27px;font:normal 400 19.4px/1 'Liberation Sans',sans-serif;color:#000;transform:scaleX(0.8407);transform-origin:left center;">0.0</span>
<div class="b" style="left:2182.90px;top:137.10px;width:86.40px;height:29.40px;background:#fff;border:1px solid #a0a2ac;box-shadow:inset 0 0 0 1px #d8d9e0,0 0 0 1px #e1e1e6"></div>
<div class="b" style="left:2245.90px;top:139.50px;width:20.60px;height:12.00px;background:#f3f3f3;border:1px solid #dedede"></div>
<div class="b" style="left:2245.90px;top:151.90px;width:20.60px;height:12.00px;background:#f3f3f3;border:1px solid #dedede"></div>
<svg width="12" height="26" viewBox="0 0 12 26" style="left:2250.2px;top:137.9px"><path d="M6 3.6 L10.4 9 H1.6 Z M6 22 L10.4 16.6 H1.6 Z" fill="#111"/></svg>
<span class="t" style="left:2186.10px;top:141.27px;font:normal 400 19.4px/1 'Liberation Sans',sans-serif;color:#000;transform:scaleX(0.8407);transform-origin:left center;">0.0</span>
<span class="t" style="left:2171.00px;top:170.15px;font:normal 400 11.4px/1 'Liberation Sans',sans-serif;color:#a9a9a9;transform:scaleX(0.9675);transform-origin:left center;">Shape model</span>
<div class="b" style="left:2247.80px;top:168.60px;width:17.60px;height:17.60px;background:#f7f7f7;border:1.3px solid #d4d4d4;border-radius:3.6px"></div>
<span class="t" style="left:2144.00px;top:192.16px;font:normal 400 15.4px/1 'Liberation Sans',sans-serif;color:#1f7a1f;transform:scaleX(1.0110);transform-origin:left center;">dia = 10.0 km</span>
<span class="t" style="left:2115.20px;top:213.46px;font:normal 400 15.4px/1 'Liberation Sans',sans-serif;color:#2a2ae6;transform:scaleX(1.0498);transform-origin:left center;">a/b: 1.00, dMag: 0.00</span>
<span class="t" style="left:2121.40px;top:258.39px;font:normal 400 15.6px/1 'Liberation Sans',sans-serif;color:#000;transform:scaleX(1.0212);transform-origin:left center;">Motion: 11.59 km/s</span>
<div class="b" style="left:1780.30px;top:288.90px;width:18.60px;height:18.60px;background:#0067c0;border-radius:3.6px"></div>
<svg width="20" height="20" viewBox="0 0 20 20" style="left:1779.6px;top:288.2px"><path d="M5.6 10.4 L8.8 13.5 L14.6 7.2" stroke="#fff" stroke-width="1.5" fill="none" stroke-linecap="round" stroke-linejoin="round"/></svg>
<span class="t" style="left:1807.70px;top:290.93px;font:normal 400 17.8px/1 'Liberation Sans',sans-serif;color:#000;transform:scaleX(0.8741);transform-origin:left center;">Circular</span>
<div class="b" style="left:1879.60px;top:288.90px;width:18.60px;height:18.60px;background:#0067c0;border-radius:3.6px"></div>
<svg width="20" height="20" viewBox="0 0 20 20" style="left:1878.9px;top:288.2px"><path d="M5.6 10.4 L8.8 13.5 L14.6 7.2" stroke="#fff" stroke-width="1.5" fill="none" stroke-linecap="round" stroke-linejoin="round"/></svg>
<span class="t" style="left:1908.40px;top:282.39px;font:normal 400 15.6px/1 'Liberation Sans',sans-serif;color:#000;transform:scaleX(0.9793);transform-origin:left center;">Use assumed</span>
<span class="t" style="left:1908.40px;top:301.59px;font:normal 400 15.6px/1 'Liberation Sans',sans-serif;color:#000;transform:scaleX(0.9787);transform-origin:left center;">dia (0.0 km)</span>
<div class="b" style="left:2032.80px;top:288.90px;width:18.60px;height:18.60px;background:#fbfbfb;border:1.7px solid #5e5e5e;border-radius:4px"></div>
<span class="t" style="left:2061.60px;top:290.93px;font:normal 400 17.8px/1 'Liberation Sans',sans-serif;color:#000;transform:scaleX(0.8931);transform-origin:left center;">Include Miss events</span>
<div class="b" style="left:1778.00px;top:328.30px;width:483.00px;height:30.00px;background:#f0f0f0;border-style:solid;border-width:2.4px 1.5px 1.5px 2.4px;border-color:#6d6d6d #fbfbfb #fbfbfb #6d6d6d;box-shadow:inset 1px 1px 0 #a9a9a9"></div>
<span class="t" style="left:1790.20px;top:335.90px;font:normal 700 17.6px/1 'Liberation Sans',sans-serif;color:#a6a6a6;transform:scaleX(0.9951);transform-origin:left center;">Double stars - show</span>
<div class="b" style="left:1978.80px;top:335.40px;width:18.80px;height:18.80px;background:#c2c2c2;border-radius:50%"></div>
<div class="b" style="left:1984.60px;top:341.20px;width:7.20px;height:7.20px;background:#fff;border-radius:50%"></div>
<span class="t" style="left:2005.20px;top:340.38px;font:normal 400 14.2px/1 'Liberation Sans',sans-serif;color:#a6a6a6;transform:scaleX(0.9859);transform-origin:left center;">Both</span>
<div class="b" style="left:2056.40px;top:335.40px;width:18.80px;height:18.80px;background:#f8f8f8;border:1.3px solid #cfcfcf;border-radius:50%"></div>
<span class="t" style="left:2083.60px;top:340.38px;font:normal 400 14.2px/1 'Liberation Sans',sans-serif;color:#a6a6a6;transform:scaleX(0.9630);transform-origin:left center;">Primary</span>
<div class="b" style="left:2153.70px;top:335.40px;width:18.80px;height:18.80px;background:#f8f8f8;border:1.3px solid #cfcfcf;border-radius:50%"></div>
<span class="t" style="left:2181.50px;top:340.38px;font:normal 400 14.2px/1 'Liberation Sans',sans-serif;color:#a6a6a6;transform:scaleX(0.9634);transform-origin:left center;">Secondary</span>
<span class="t" style="left:1778.00px;top:377.51px;font:normal 700 19px/1 'Liberation Sans',sans-serif;color:#0a6a0a;transform:scaleX(1.0401);transform-origin:left center;">Quality of the fit</span>
<div class="b" style="left:1937.50px;top:369.40px;width:324.40px;height:29.00px;background:#fff;border:1px solid #8a8a8a;border-radius:3px"></div>
<span class="t" style="left:1940.80px;top:375.13px;font:normal 400 17.8px/1 'Liberation Sans',sans-serif;color:#000;transform:scaleX(0.8724);transform-origin:left center;">Astrometry only. No reliable size</span>
<svg width="16" height="10" viewBox="0 0 16 10" style="left:2240.6px;top:380.6px"><path d="M1.6 1.8 L7.6 7.8 L13.6 1.8" stroke="#333" stroke-width="1.4" fill="none"/></svg>
<span class="t" style="left:1817.00px;top:407.50px;font:normal 700 18.9px/1 'Liberation Sans',sans-serif;color:#860a12;transform:scaleX(0.9537);transform-origin:left center;">Review flags</span>
<div class="b" style="left:1937.50px;top:402.40px;width:323.00px;height:27.80px;background:#e0ffff;border-style:solid;border-width:2.4px 1.5px 1.5px 2.4px;border-color:#6d6d6d #fbfbfb #fbfbfb #6d6d6d;box-shadow:inset 1px 1px 0 #a9a9a9"></div>
<div class="b" style="left:1944.80px;top:408.20px;width:18.60px;height:18.60px;background:#fbfbfb;border:1.7px solid #5e5e5e;border-radius:4px"></div>
<span class="t" style="left:1972.70px;top:409.13px;font:normal 400 17.8px/1 'Liberation Sans',sans-serif;color:#000;transform:scaleX(1.0264);transform-origin:left center;">0 items are tagged for review</span>
<div class="b" style="left:1764.10px;top:434.50px;width:508.50px;height:122.70px;background:#f0ffff;border-style:solid;border-width:2.6px 1.5px 1.5px 2.6px;border-color:#6d6d6d #fbfbfb #fbfbfb #6d6d6d;box-shadow:inset 1px 1px 0 #a9a9a9"></div>
<span class="t" style="left:1776.60px;top:459.06px;font:normal 700 18px/1 'Liberation Sans',sans-serif;color:#860a12;">P</span>
<span class="t" style="left:1777.10px;top:478.26px;font:normal 700 18px/1 'Liberation Sans',sans-serif;color:#860a12;">L</span>
<span class="t" style="left:1775.60px;top:498.46px;font:normal 700 18px/1 'Liberation Sans',sans-serif;color:#860a12;">O</span>
<span class="t" style="left:1777.10px;top:518.16px;font:normal 700 18px/1 'Liberation Sans',sans-serif;color:#860a12;">T</span>
<span class="t" style="left:1806.90px;top:452.34px;font:normal 700 19.2px/1 'Liberation Sans',sans-serif;color:#860a12;transform:scaleX(0.9327);transform-origin:left center;">Scale</span>
<div class="b" style="left:1864.70px;top:447.50px;width:403.60px;height:28.60px;background:#fffacd;"></div>
<div class="b" style="left:1872.00px;top:455.60px;width:387.00px;height:5.40px;background:#e7e7e7;border:1px solid #d6d6d6;border-radius:1px"></div>
<svg width="12" height="17" viewBox="0 0 12 17" style="left:2040.6px;top:451.4px"><path d="M1.2 1.6 Q1.2 0.6 2.2 0.6 H9.4 Q10.4 0.6 10.4 1.6 V10.6 L5.8 15.4 L1.2 10.6 Z" fill="#0a6acb"/></svg>
<div class="b" style="left:1876.70px;top:470.40px;width:1.40px;height:5.20px;background:#a3a3a3;"></div>
<div class="b" style="left:1895.62px;top:470.40px;width:1.40px;height:5.20px;background:#a3a3a3;"></div>
<div class="b" style="left:1914.53px;top:470.40px;width:1.40px;height:5.20px;background:#a3a3a3;"></div>
<div class="b" style="left:1933.44px;top:470.40px;width:1.40px;height:5.20px;background:#a3a3a3;"></div>
<div class="b" style="left:1952.36px;top:470.40px;width:1.40px;height:5.20px;background:#a3a3a3;"></div>
<div class="b" style="left:1971.28px;top:470.40px;width:1.40px;height:5.20px;background:#a3a3a3;"></div>
<div class="b" style="left:1990.19px;top:470.40px;width:1.40px;height:5.20px;background:#a3a3a3;"></div>
<div class="b" style="left:2009.11px;top:470.40px;width:1.40px;height:5.20px;background:#a3a3a3;"></div>
<div class="b" style="left:2028.02px;top:470.40px;width:1.40px;height:5.20px;background:#a3a3a3;"></div>
<div class="b" style="left:2046.93px;top:470.40px;width:1.40px;height:5.20px;background:#a3a3a3;"></div>
<div class="b" style="left:2065.85px;top:470.40px;width:1.40px;height:5.20px;background:#a3a3a3;"></div>
<div class="b" style="left:2084.77px;top:470.40px;width:1.40px;height:5.20px;background:#a3a3a3;"></div>
<div class="b" style="left:2103.68px;top:470.40px;width:1.40px;height:5.20px;background:#a3a3a3;"></div>
<div class="b" style="left:2122.60px;top:470.40px;width:1.40px;height:5.20px;background:#a3a3a3;"></div>
<div class="b" style="left:2141.51px;top:470.40px;width:1.40px;height:5.20px;background:#a3a3a3;"></div>
<div class="b" style="left:2160.43px;top:470.40px;width:1.40px;height:5.20px;background:#a3a3a3;"></div>
<div class="b" style="left:2179.34px;top:470.40px;width:1.40px;height:5.20px;background:#a3a3a3;"></div>
<div class="b" style="left:2198.26px;top:470.40px;width:1.40px;height:5.20px;background:#a3a3a3;"></div>
<div class="b" style="left:2217.17px;top:470.40px;width:1.40px;height:5.20px;background:#a3a3a3;"></div>
<div class="b" style="left:2236.09px;top:470.40px;width:1.40px;height:5.20px;background:#a3a3a3;"></div>
<div class="b" style="left:2255.00px;top:470.40px;width:1.40px;height:5.20px;background:#a3a3a3;"></div>
<span class="t" style="left:1806.90px;top:492.31px;font:normal 700 19px/1 'Liberation Sans',sans-serif;color:#860a12;transform:scaleX(0.8969);transform-origin:left center;">Size</span>
<div class="b" style="left:1851.40px;top:486.40px;width:244.00px;height:32.50px;background:#f0fff0;border-style:solid;border-width:2.4px 1.5px 1.5px 2.4px;border-color:#6d6d6d #fbfbfb #fbfbfb #6d6d6d;box-shadow:inset 1px 1px 0 #a9a9a9"></div>
<div class="b" style="left:1866.00px;top:493.40px;width:18.80px;height:18.80px;background:#0067c0;border-radius:50%"></div>
<div class="b" style="left:1871.60px;top:499.00px;width:7.60px;height:7.60px;background:#fff;border-radius:50%"></div>
<span class="t" style="left:1893.70px;top:494.64px;font:normal 700 17.9px/1 'Liberation Sans',sans-serif;color:#860a12;transform:scaleX(0.9216);transform-origin:left center;">normal</span>
<div class="b" style="left:1962.50px;top:493.40px;width:18.80px;height:18.80px;background:#fafafa;border:1.4px solid #5a5a5a;border-radius:50%"></div>
<span class="t" style="left:1990.50px;top:494.64px;font:normal 700 17.9px/1 'Liberation Sans',sans-serif;color:#860a12;transform:scaleX(1.0408);transform-origin:left center;">x 2</span>
<div class="b" style="left:2028.20px;top:493.40px;width:18.80px;height:18.80px;background:#fafafa;border:1.4px solid #5a5a5a;border-radius:50%"></div>
<span class="t" style="left:2055.90px;top:494.64px;font:normal 700 17.9px/1 'Liberation Sans',sans-serif;color:#860a12;transform:scaleX(1.0770);transform-origin:left center;">x 5</span>
<span class="t" style="left:2129.30px;top:493.71px;font:normal 700 18.3px/1 'Liberation Sans',sans-serif;color:#800080;transform:scaleX(0.9277);transform-origin:left center;">Form opacity</span>
<span class="t" style="left:1807.70px;top:530.58px;font:normal 700 18.8px/1 'Liberation Sans',sans-serif;color:#860a12;transform:scaleX(0.9638);transform-origin:left center;">Scroll range x1.25</span>
<div class="b" style="left:1974.70px;top:531.00px;width:18.60px;height:18.60px;background:#fbfbfb;border:1.7px solid #5e5e5e;border-radius:4px"></div>
<div class="b" style="left:2097.70px;top:520.30px;width:171.20px;height:30.40px;background:#fffacd;"></div>
<div class="b" style="left:2105.90px;top:529.30px;width:152.60px;height:5.20px;background:#e7e7e7;border:1px solid #d6d6d6;border-radius:1px"></div>
<svg width="13" height="20" viewBox="0 0 13 20" style="left:2247.2px;top:522.6px"><path d="M1 1.8 Q1 0.6 2.2 0.6 H10.2 Q11.4 0.6 11.4 1.8 V13.4 L6.2 18.8 L1 13.4 Z" fill="#0a6acb"/></svg>
<div class="b" style="left:2109.90px;top:545.20px;width:1.40px;height:5.00px;background:#a3a3a3;"></div>
<div class="b" style="left:2138.10px;top:545.20px;width:1.40px;height:5.00px;background:#a3a3a3;"></div>
<div class="b" style="left:2166.30px;top:545.20px;width:1.40px;height:5.00px;background:#a3a3a3;"></div>
<div class="b" style="left:2194.50px;top:545.20px;width:1.40px;height:5.00px;background:#a3a3a3;"></div>
<div class="b" style="left:2222.70px;top:545.20px;width:1.40px;height:5.00px;background:#a3a3a3;"></div>
<div class="b" style="left:2250.90px;top:545.20px;width:1.40px;height:5.00px;background:#a3a3a3;"></div>
<span class="t" style="left:1785.10px;top:576.13px;font:normal 400 17.8px/1 'Liberation Sans',sans-serif;color:#000;transform:scaleX(0.8915);transform-origin:left center;">RMS fit -0.6 ±0.0 km</span>
<div class="b" style="left:1773.80px;top:604.60px;width:489.60px;height:1158.00px;background:#fff;border-style:solid;border-width:2.4px 1.5px 1.5px 2.4px;border-color:#7a7a7a #f7f7f7 #f7f7f7 #7a7a7a;box-shadow:inset 1px 1px 0 #b4b4b4"></div>
<div class="b" style="left:1776.40px;top:1737.80px;width:485.40px;height:23.40px;background:#f0f0f0;"></div>
<div class="b" style="left:1801.50px;top:1748.20px;width:320.00px;height:2.80px;background:#8a8a8a;border-radius:1.4px"></div>
<div class="b" style="left:1783.70px;top:616.00px;width:98.80px;height:3.00px;background:#4b0f8c;"></div>
<div class="b" style="left:1785.40px;top:634.40px;width:4.00px;height:4.00px;background:#444;border-radius:50%"></div>
<div class="b" style="left:1807.70px;top:634.40px;width:4.00px;height:4.00px;background:#444;border-radius:50%"></div>
<div class="b" style="left:1830.20px;top:634.40px;width:4.00px;height:4.00px;background:#444;border-radius:50%"></div>
<div class="b" style="left:1852.20px;top:634.40px;width:4.00px;height:4.00px;background:#444;border-radius:50%"></div>
<div class="b" style="left:1875.40px;top:634.40px;width:4.00px;height:4.00px;background:#444;border-radius:50%"></div>
<div class="b" style="left:1900px;top:606px;width:361.8px;height:60px;overflow:hidden">
<span class="t" style="left:17.70px;top:4.91px;font:normal 400 18px/1 'Liberation Mono',monospace;color:#111;transform:scaleX(1.1378);transform-origin:left center;">1    Hidehito Yamamura, near Osaka</span>
<span class="t" style="left:17.70px;top:22.91px;font:normal 400 18px/1 'Liberation Mono',monospace;color:#111;transform:scaleX(1.1378);transform-origin:left center;">2(P) Predicted</span>
</div>
</aside>
</body></html>
